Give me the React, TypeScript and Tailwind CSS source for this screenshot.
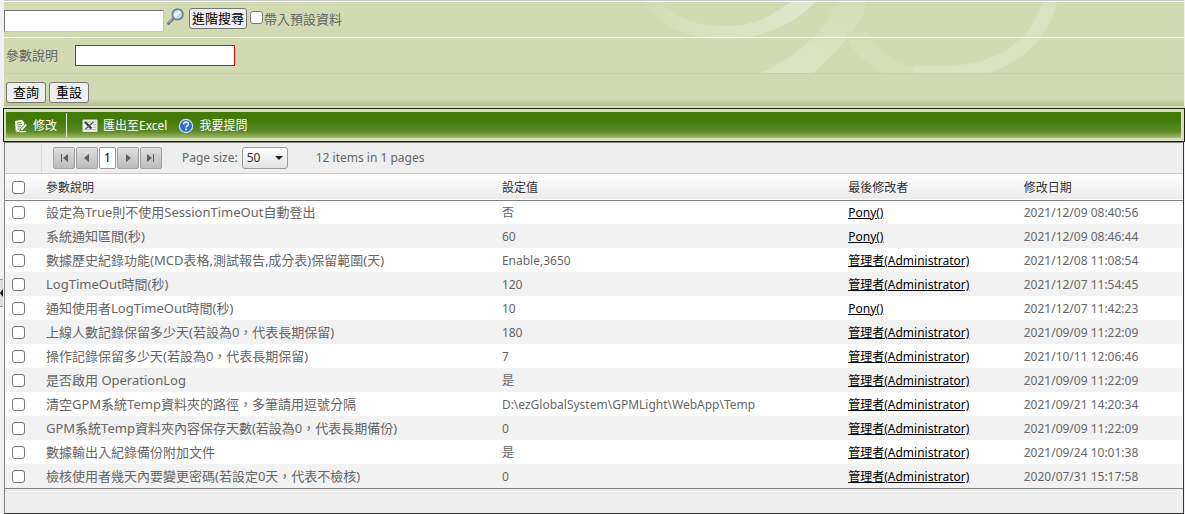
import React, { useState } from "react";

type Setting = { name: string; value: string; modifier: string; date: string };

const ADMIN = "管理者(Administrator)";

const settings: Setting[] = [
  { name: "設定為True則不使用SessionTimeOut自動登出", value: "否", modifier: "Pony()", date: "2021/12/09 08:40:56" },
  { name: "系統通知區間(秒)", value: "60", modifier: "Pony()", date: "2021/12/09 08:46:44" },
  { name: "數據歷史紀錄功能(MCD表格,測試報告,成分表)保留範圍(天)", value: "Enable,3650", modifier: ADMIN, date: "2021/12/08 11:08:54" },
  { name: "LogTimeOut時間(秒)", value: "120", modifier: ADMIN, date: "2021/12/07 11:54:45" },
  { name: "通知使用者LogTimeOut時間(秒)", value: "10", modifier: "Pony()", date: "2021/12/07 11:42:23" },
  { name: "上線人數記錄保留多少天(若設為0，代表長期保留)", value: "180", modifier: ADMIN, date: "2021/09/09 11:22:09" },
  { name: "操作記錄保留多少天(若設為0，代表長期保留)", value: "7", modifier: ADMIN, date: "2021/10/11 12:06:46" },
  { name: "是否啟用 OperationLog", value: "是", modifier: ADMIN, date: "2021/09/09 11:22:09" },
  { name: "清空GPM系統Temp資料夾的路徑，多筆請用逗號分隔", value: "D:\\ezGlobalSystem\\GPMLight\\WebApp\\Temp", modifier: ADMIN, date: "2021/09/21 14:20:34" },
  { name: "GPM系統Temp資料夾內容保存天數(若設為0，代表長期備份)", value: "0", modifier: ADMIN, date: "2021/09/09 11:22:09" },
  { name: "數據輸出入紀錄備份附加文件", value: "是", modifier: ADMIN, date: "2021/09/24 10:01:38" },
  { name: "檢核使用者幾天內要變更密碼(若設定0天，代表不檢核)", value: "0", modifier: ADMIN, date: "2020/07/31 15:17:58" },
];

const SearchIcon = () => (
  <svg className="block size-[17px]" viewBox="0 0 16 16" fill="none" aria-hidden="true">
    <path d="M6.3 9.7 1.4 14.6" stroke="#6f7274" strokeWidth="2.6" strokeLinecap="round" />
    <path d="M6 9.4 1.4 14" stroke="#aaadb0" strokeWidth="1" />
    <circle cx="10" cy="6" r="5" fill="#b4dbf5" stroke="#777e88" strokeWidth="1.6" />
    <path d="M6.6 7.5a5 5 0 0 1 6.7-4.3L8 9.2a4 4 0 0 1-1.4-1.7Z" fill="#f1faff" />
  </svg>
);

const EditIcon = () => (
  <svg className="size-3.5" viewBox="0 0 14 14" fill="none" aria-hidden="true">
    <path d="M1 2 8 .8l2.2 2.6V6L6 10.2 5.2 13 1.8 12.6Z" fill="#fff" />
    <path d="m3 4 4.4-.6M3.1 6l5-.6M3.3 8l3.7-.5M3.5 10l2-.3" stroke="#5b8430" strokeWidth=".9" />
    <path d="M6 12.2 6.8 9.6 11.6 4.6 13.4 6.2 8.6 11.3Z" fill="#fff" stroke="#3d6b10" strokeWidth=".8" />
    <path d="M5.5 12.6h6.5" stroke="#fff" strokeWidth="1.4" />
  </svg>
);

const ExcelIcon = () => (
  <svg className="h-3.5 w-4" viewBox="0 0 16 14" fill="none" aria-hidden="true">
    <path d="M1 1h14v11.5H1Z" fill="#f4f5f2" stroke="#dfe3da" />
    <path d="M2 3h12M11 5.5h3M11 8h3M2 10.5h12" stroke="#a8aeaa" strokeWidth=".8" />
    <path d="m3 3 6.5 6.5" stroke="#3c4446" strokeWidth="2.4" />
    <path d="M11.5 3 3.5 10" stroke="#565e60" strokeWidth="1.5" />
  </svg>
);

const HelpIcon = () => (
  <svg className="size-4" viewBox="0 0 16 16" fill="none" aria-hidden="true">
    <circle cx="8" cy="8" r="6.6" fill="#2b6bd0" stroke="#cfe0fa" strokeWidth="1.2" />
    <path d="M5.7 6.4c0-1.6 1-2.4 2.4-2.4s2.4.8 2.4 2.1c0 1.7-2.4 1.8-2.4 3.4" stroke="#fff" strokeWidth="1.6" />
    <path d="M7.2 10.6H9v1.7H7.2Z" fill="#fff" />
  </svg>
);

const Swirls = () => (
  <svg
    className="pointer-events-none absolute top-0 right-0 h-full w-[585px]"
    viewBox="0 0 585 72"
    preserveAspectRatio="none"
    fill="none"
    aria-hidden="true"
  >
    <defs>
      <linearGradient id="arc" x1="0" x2="1">
        <stop offset="0" stopColor="#d3dbb6" />
        <stop offset=".5" stopColor="#dae2c1" />
        <stop offset="1" stopColor="#e0e6cb" />
      </linearGradient>
      <linearGradient id="band" x1="0" x2="0" y1="0" y2="1">
        <stop offset="0" stopColor="#d4dcb8" />
        <stop offset="1" stopColor="#dbe3c3" />
      </linearGradient>
    </defs>
    <path d="M43 0C58 20 84 37 124 37S196 22 216 0h-25C170 16 155 24 125 24S76 15 62 0Z" fill="url(#arc)" />
    <path d="M237 0c-9 24-30 50-77 72h53c24-22 52-48 54-72Z" fill="url(#band)" />
    <path d="M246 30c6 20 22 34 45 42h50c-40-6-64-22-72-42Z" fill="#d5ddb9" />
    <path d="M444 0c-16 45-52 64-101 64h-28v8h71c34-10 64-34 72-72Z" fill="#d9e1c0" />
  </svg>
);

const pagerIcons: Record<string, string> = {
  First: "M2 1h1v8H2ZM9 1v8L4 5Z",
  Previous: "M7 1v8L2 5Z",
  Next: "M3 1v8l5-4Z",
  Last: "M1 1v8l5-4ZM7 1h1v8H7Z",
};

const PagerButton = ({ label }: { label: string }) => (
  <button
    type="button"
    aria-label={`${label} page`}
    className="flex h-[22px] w-[22px] items-center justify-center rounded-[2px] border border-[#a2a2a2] bg-gradient-to-b from-[#dedede] to-[#bcbcbc]"
  >
    <svg className="size-2.5" viewBox="0 0 10 10" aria-hidden="true">
      <path d={pagerIcons[label]} fill="#5d5d5d" />
    </svg>
  </button>
);

const GrayButton = ({ className = "px-1.5", children }: { className?: string; children: React.ReactNode }) => (
  <button
    type="button"
    className={`${className} block h-[21px] rounded-[3px] border border-[#767676] bg-[#efefef] text-[13px] leading-none whitespace-nowrap text-black`}
  >
    {children}
  </button>
);

const checkboxClass = "block size-[13px] appearance-none rounded-[3px] border border-[#767676] bg-white checked:bg-[#0075ff]";

const SearchPanel = () => (
  <form className="mr-px border-t border-[#c9c9c9] bg-[#d2dab4]" onSubmit={(e) => e.preventDefault()}>
    <div className="relative border-t border-white">
      <Swirls />
      <div className="relative flex h-9 items-start border-b border-white pt-1.5 pr-2">
        <input
          type="text"
          aria-label="關鍵字"
          className="mt-0.5 h-[22px] w-40 border border-t-[#767676] border-r-[#c4c4c4] border-b-[#c4c4c4] border-l-[#767676] bg-white px-1 text-[13px]"
        />
        <button type="button" aria-label="搜尋" className="ml-[3px]">
          <SearchIcon />
        </button>
        <div className="ml-[5px]">
          <GrayButton className="px-0.5">進階搜尋</GrayButton>
        </div>
        <label className="ml-[3px] flex items-start gap-px">
          <input type="checkbox" className={`${checkboxClass} mt-[3px]`} />
          <span className="text-[13px] leading-[22px]">帶入預設資料</span>
        </label>
      </div>
      <div className="relative flex h-9 items-center border-b border-[#c8cbbf]">
        <label htmlFor="param-desc" className="w-[71px] pl-0.5 text-[13px]">
          參數說明
        </label>
        <input id="param-desc" type="text" className="h-[21px] w-40 border border-[#f00] bg-white px-1 text-[13px]" />
      </div>
    </div>
    <div className="flex h-8 items-end gap-[3px] bg-gradient-to-b from-[#d2dab4] from-75% to-[#b3bd8a] pb-[3px] pl-0.5">
      <GrayButton>查詢</GrayButton>
      <GrayButton>重設</GrayButton>
    </div>
  </form>
);

const Toolbar = () => (
  <div className="-ml-px border border-[#1c2310] bg-[#d7dfba] p-[3px] pl-[2px]">
    <div className="flex h-[26px] items-center bg-gradient-to-b from-[#437a08] from-35% via-[#5c8a25] via-75% to-[#a3bd67] text-xs text-white">
      <button type="button" className="flex items-center gap-[5px] pt-0.5 pl-2">
        <EditIcon />
        修改
      </button>
      <span className="mr-[15px] ml-[9px] h-6 w-px bg-[#e8efd8]" />
      <button type="button" className="flex items-center gap-[5px] pt-0.5">
        <ExcelIcon />
        匯出至Excel
      </button>
      <button type="button" className="ml-[11px] flex items-center gap-[5px] pt-0.5">
        <HelpIcon />
        我要提問
      </button>
    </div>
  </div>
);

const Pager = () => (
  <div className="flex h-[31px] items-center border-b border-[#c9c9c9] bg-[#eee] text-xs">
    <div className="mr-[11px] h-full w-[37px] border-r border-[#dcdcdc]" />
    <div className="flex gap-px">
      <PagerButton label="First" />
      <PagerButton label="Previous" />
      <button type="button" className="h-[22px] w-[17px] rounded-[2px] border border-[#999] bg-white text-xs text-black">
        1
      </button>
      <PagerButton label="Next" />
      <PagerButton label="Last" />
    </div>
    <label htmlFor="page-size" className="mr-1 ml-5">
      Page size:
    </label>
    <div className="relative">
      <select
        id="page-size"
        defaultValue="50"
        className="block h-[22px] w-[46px] appearance-none rounded-[3px] border border-[#9a9a9a] bg-gradient-to-b from-white to-[#e2e2e2] pl-1 text-xs leading-5 text-[#333]"
      >
        <option>10</option>
        <option>20</option>
        <option>50</option>
      </select>
      <svg className="pointer-events-none absolute top-2 right-[5px] h-1.5 w-2" viewBox="0 0 8 6" aria-hidden="true">
        <path d="M0 1h8L4 5Z" fill="#222" />
      </svg>
    </div>
    <span className="ml-7">12 items in 1 pages</span>
  </div>
);

const SettingsTable = () => {
  const [selected, setSelected] = useState<number[]>([]);

  const toggle = (index: number) =>
    setSelected((prev) => (prev.includes(index) ? prev.filter((i) => i !== index) : [...prev, index]));

  const allSelected = selected.length === settings.length;

  return (
    <table className="w-full table-fixed border-collapse text-left">
      <colgroup>
        <col className="w-[33px]" />
        <col className="w-[38.7%]" />
        <col className="w-[29.4%]" />
        <col className="w-[14.9%]" />
        <col />
      </colgroup>
      <thead>
        <tr className="h-[26px] border-b border-[#828282] bg-gradient-to-b from-white to-[#ebebeb] text-xs text-[#333]">
          <th className="pt-0.5 pl-[7px]">
            <input
              type="checkbox"
              aria-label="全選"
              className={checkboxClass}
              checked={allSelected}
              onChange={() => setSelected(allSelected ? [] : settings.map((_, i) => i))}
            />
          </th>
          <th className="pt-0.5 pl-2 font-normal">參數說明</th>
          <th className="pt-0.5 pl-2 font-normal">設定值</th>
          <th className="pt-0.5 pl-2 font-normal">最後修改者</th>
          <th className="pt-0.5 pl-2 font-normal">修改日期</th>
        </tr>
      </thead>
      <tbody>
        {settings.map((item, index) => (
          <tr key={item.name} className="h-6 bg-white whitespace-nowrap even:bg-[#f2f2f2]">
            <td className="pl-[7px]">
              <input
                type="checkbox"
                aria-label={item.name}
                className={checkboxClass}
                checked={selected.includes(index)}
                onChange={() => toggle(index)}
              />
            </td>
            <td className="pl-2 text-[13px] leading-5">{item.name}</td>
            <td className="pt-px pl-2 text-xs leading-5">{item.value}</td>
            <td className="pt-px pl-2 text-xs leading-5">
              <a href="#" className="text-black underline">
                {item.modifier}
              </a>
            </td>
            <td className="pt-px pl-2 text-xs leading-5">{item.date}</td>
          </tr>
        ))}
      </tbody>
    </table>
  );
};

const App = () => (
  <div className="flex bg-[#f1f1f3] font-['Noto_Sans','Noto_Sans_CJK_TC',sans-serif] text-[#666]">
    <aside className="flex w-1 shrink-0 items-center">
      <button type="button" aria-label="展開選單" className="mt-[72px] flex h-7 w-[3px] items-center border-y border-[#999] bg-[#ddd]">
        <svg className="h-2 w-[3px]" viewBox="0 0 3 8" aria-hidden="true">
          <path d="M3 0v8L0 4Z" fill="#000" />
        </svg>
      </button>
    </aside>
    <main className="min-w-0 flex-1">
      <SearchPanel />
      <div className="h-0.5 bg-[#d7dfba]" />
      <Toolbar />
      <div className="mr-px border border-[#828282] border-r-[#333] border-b-[#333]">
        <Pager />
        <SettingsTable />
        <div className="h-[25px] border-t border-[#828282] bg-[#eee]" />
      </div>
    </main>
  </div>
);

export default App;
